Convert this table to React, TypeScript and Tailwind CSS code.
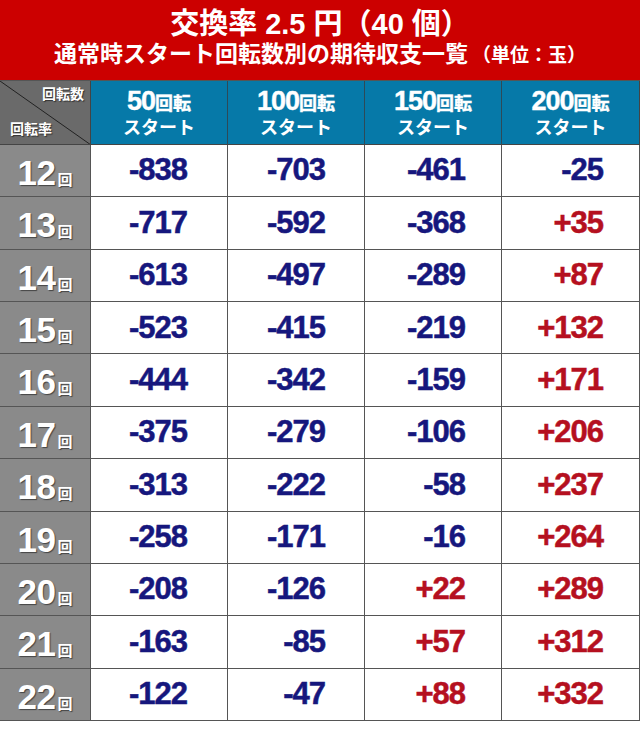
const rows: { label: number; values: number[] }[] = [
  { label: 12, values: [-838, -703, -461, -25] },
  { label: 13, values: [-717, -592, -368, 35] },
  { label: 14, values: [-613, -497, -289, 87] },
  { label: 15, values: [-523, -415, -219, 132] },
  { label: 16, values: [-444, -342, -159, 171] },
  { label: 17, values: [-375, -279, -106, 206] },
  { label: 18, values: [-313, -222, -58, 237] },
  { label: 19, values: [-258, -171, -16, 264] },
  { label: 20, values: [-208, -126, 22, 289] },
  { label: 21, values: [-163, -85, 57, 312] },
  { label: 22, values: [-122, -47, 88, 332] },
];

const starts = [50, 100, 150, 200];
const padRight = ["pr-[40px]", "pr-[39px]", "pr-[36px]", "pr-[36px]"];

const font = { fontFamily: '"Liberation Sans", "Noto Sans CJK JP", sans-serif' };

function fmt(n: number) {
  return n > 0 ? `+${n}` : `${n}`;
}

export default function App() {
  return (
    <div className="w-[640px] h-[731px] bg-white" style={font}>
      {/* タイトル */}
      <div className="h-[81px] bg-[#cc0000] border-b border-[#555] flex flex-col items-center justify-center text-white font-bold">
        <div className="text-[29px] leading-[32px] -mt-[2px]">
          交換率 2.5 円（40 個）
        </div>
        <div className="flex items-baseline leading-[28px]">
          <span className="text-[23px]">通常時スタート回転数別の期待収支一覧</span>
          <span className="text-[19px] ml-[4px]">（単位：玉）</span>
        </div>
      </div>

      {/* ヘッダー行 */}
      <div className="grid grid-cols-[91px_repeat(4,137px)] h-[64px] border-b border-[#444] border-r w-[640px]">
        <div className="relative bg-[#6a6a6a] border-r border-[#444] text-white font-bold text-[14px] overflow-hidden">
          <svg className="absolute inset-0" width="91" height="64" viewBox="0 0 91 64">
            <line x1="0" y1="0" x2="91" y2="64" stroke="#222" strokeWidth="1" />
          </svg>
          <span className="absolute right-[6px] top-[3px] [text-shadow:1px_1px_1px_#333]">回転数</span>
          <span className="absolute left-[10px] bottom-[4px] [text-shadow:1px_1px_1px_#333]">回転率</span>
        </div>
        {starts.map((s, i) => (
          <div
            key={s}
            className={`bg-[#0679a8] flex flex-col items-center justify-center pt-[2px] text-white font-bold ${i < 3 ? "border-r border-[#2d4a58]" : ""}`}
          >
            <div className="flex items-baseline leading-[26px] tracking-[-1px] [-webkit-text-stroke:0.4px_white]">
              <span className="text-[27px]">{s}</span>
              <span className="text-[18px] tracking-normal">回転</span>
            </div>
            <div className="text-[18px] leading-[23px]">スタート</div>
          </div>
        ))}
      </div>

      {/* データ行 */}
      <div className="grid grid-rows-[repeat(11,1fr)] h-[576px] border-r border-[#555]">
        {rows.map((r) => (
          <div
            key={r.label}
            className="grid grid-cols-[91px_repeat(4,137px)] border-b border-[#555]"
          >
            <div className="bg-[#8a8a8a] border-r border-[#555] flex items-baseline justify-center pt-[11px] text-white font-bold [text-shadow:1px_1px_1px_#444]">
              <span className="text-[35px] leading-[34px] tracking-[-0.5px]">{r.label}</span>
              <span className="text-[15px] ml-[2px]">回</span>
            </div>
            {r.values.map((v, i) => (
              <div
                key={i}
                className={`flex items-center justify-end ${padRight[i]} ${i < 3 ? "border-r border-[#555]" : ""}`}
              >
                <span
                  className={`text-[31px] font-bold tracking-[-1px] ${v > 0 ? "text-[#b5101f] [-webkit-text-stroke:0.5px_#b5101f]" : "text-[#16177d] [-webkit-text-stroke:0.5px_#16177d]"}`}
                >
                  {fmt(v)}
                </span>
              </div>
            ))}
          </div>
        ))}
      </div>
    </div>
  );
}
